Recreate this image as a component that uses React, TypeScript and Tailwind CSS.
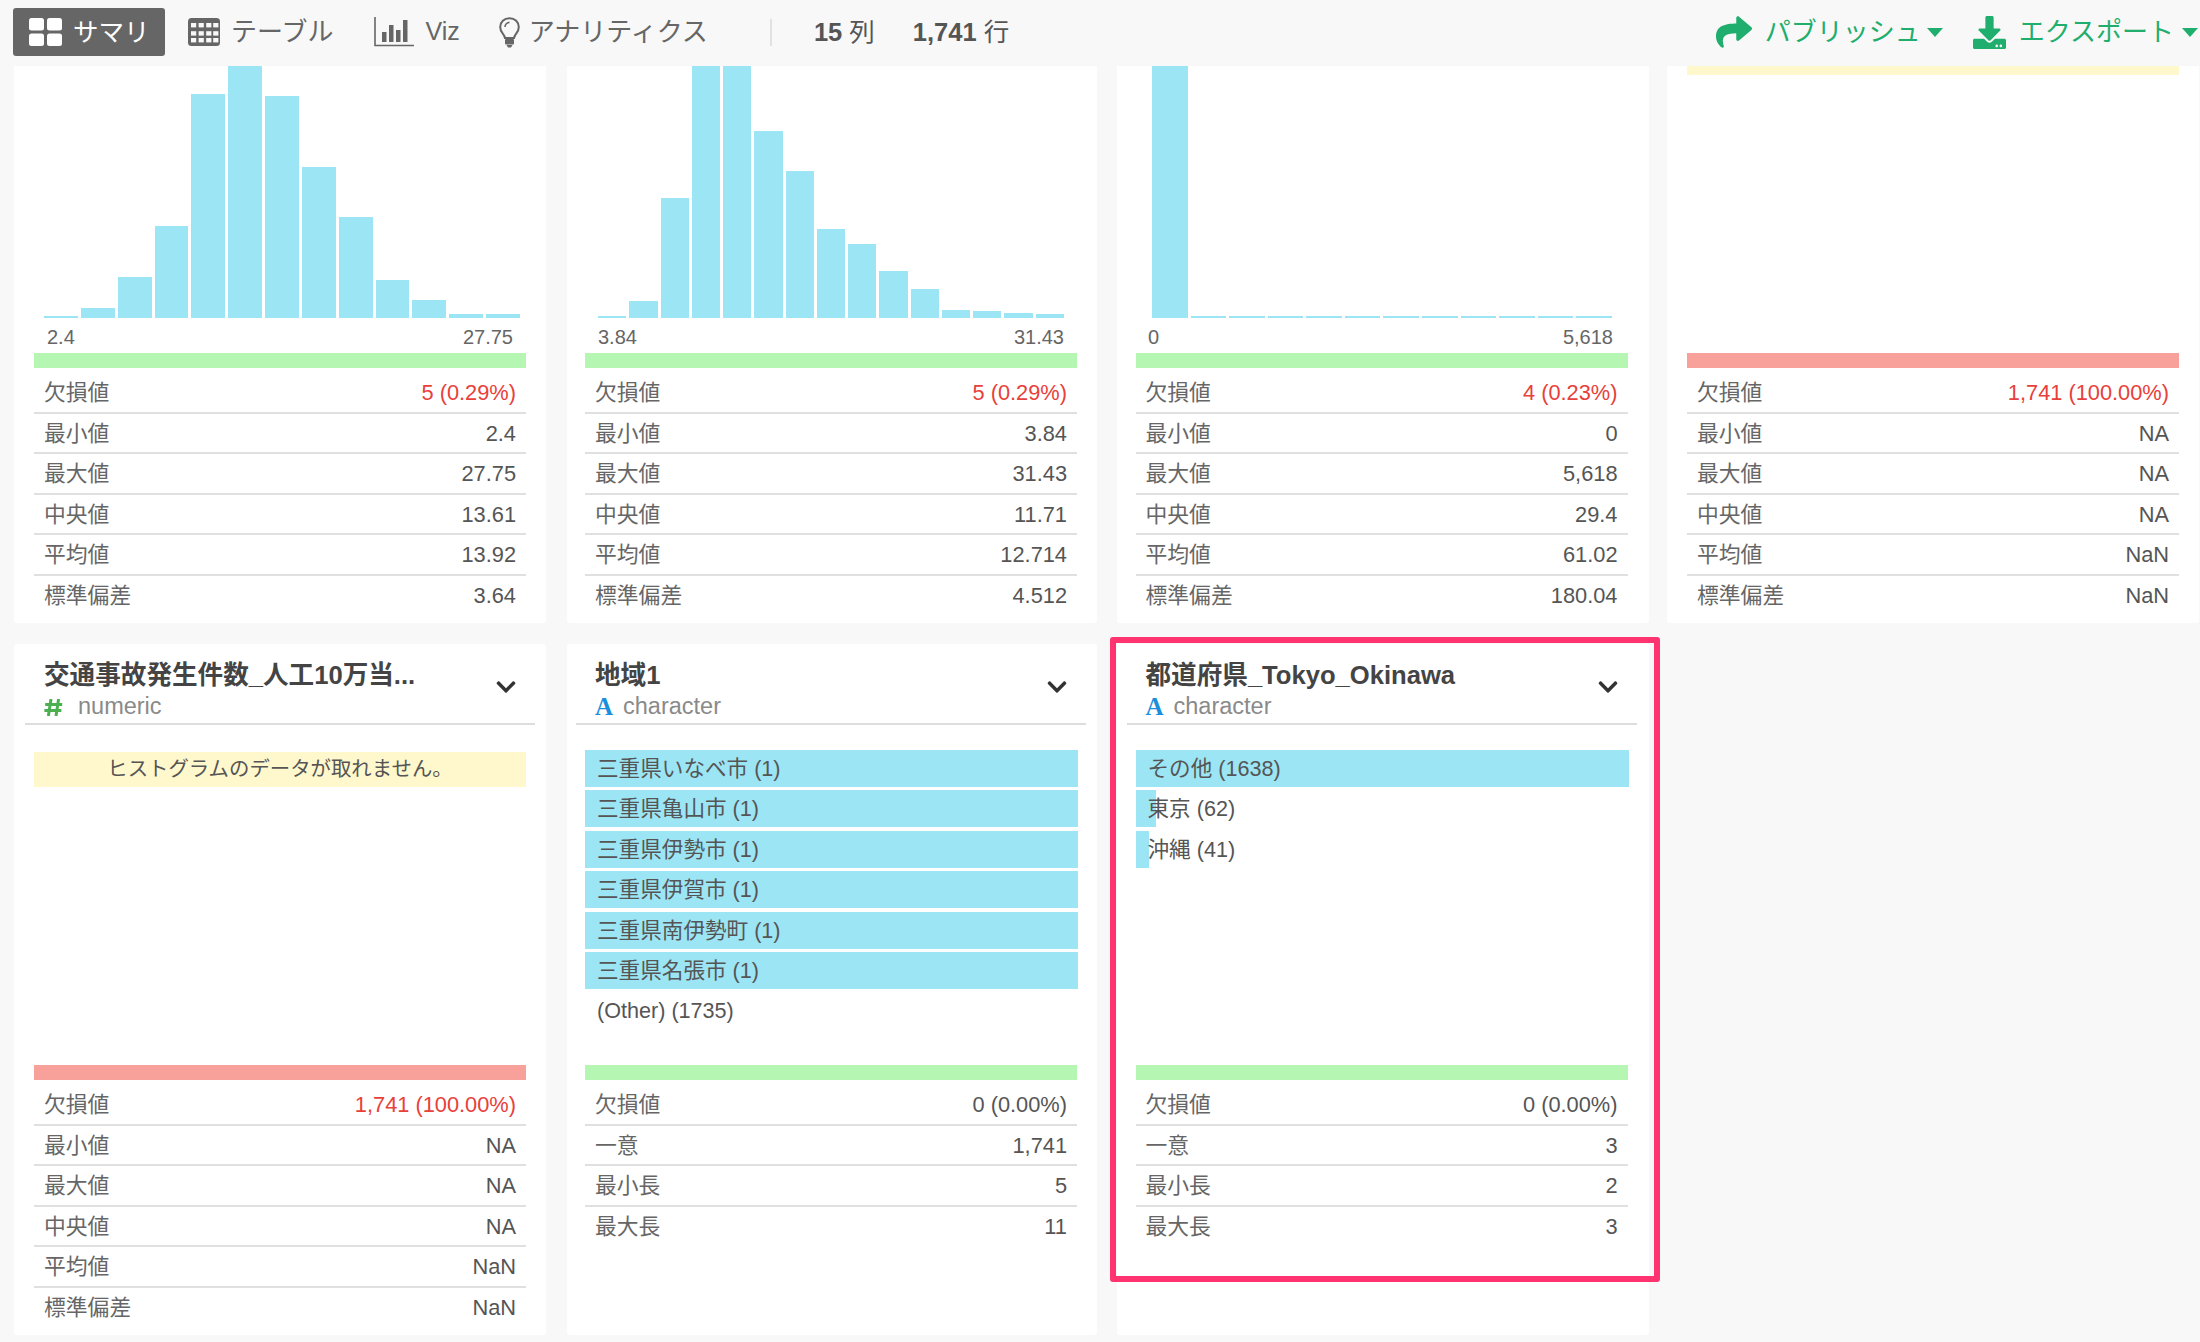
import React from "react";
import { FaShare, FaDownload, FaChevronDown } from "react-icons/fa";

type Row = [string, string, boolean?];

const Caret = () => (
  <svg width="16" height="9" viewBox="0 0 16 9" className="shrink-0">
    <path d="M0 0h16L8 9z" fill="#1fae6d" />
  </svg>
);

const SummaryIcon = () => (
  <svg width="33" height="28" viewBox="0 0 33 28" className="shrink-0">
    <rect x="0" y="0" width="15" height="12.5" rx="2.5" fill="#fff" />
    <rect x="18" y="0" width="15" height="12.5" rx="2.5" fill="#fff" />
    <rect x="0" y="15.5" width="15" height="12.5" rx="2.5" fill="#fff" />
    <rect x="18" y="15.5" width="15" height="12.5" rx="2.5" fill="#fff" />
  </svg>
);

const TableIcon = () => (
  <svg width="32" height="28" viewBox="0 0 32 28" className="shrink-0">
    <rect x="0" y="0" width="32" height="28" rx="3.5" fill="#666" />
    {[5, 13.2, 20].map((y) =>
      [3, 10.6, 18.2, 25.2].map((x) => (
        <rect key={`${x}-${y}`} x={x} y={y} width="5.2" height="4.4" fill="#f8f8f8" />
      ))
    )}
  </svg>
);

const ChartIcon = () => (
  <svg width="40" height="30" viewBox="0 0 40 30" className="shrink-0">
    <path d="M1 0v28.5h39" fill="none" stroke="#666" strokeWidth="1.6" />
    <rect x="8" y="15" width="4.5" height="10" fill="#666" />
    <rect x="15" y="8" width="4.5" height="17" fill="#666" />
    <rect x="22" y="13" width="4.5" height="12" fill="#666" />
    <rect x="29" y="3" width="4.5" height="22" fill="#666" />
  </svg>
);

const BulbIcon = () => (
  <svg width="21" height="31" viewBox="0 0 21 31" className="shrink-0">
    <path
      d="M10.5 1.2C5 1.2 1.2 5.2 1.2 10c0 3 1.3 5 2.6 6.7 1.1 1.5 2 2.8 2.2 4.3h9c.2-1.5 1.1-2.8 2.2-4.3 1.3-1.7 2.6-3.7 2.6-6.7 0-4.8-3.8-8.8-9.3-8.8z"
      fill="none"
      stroke="#666"
      strokeWidth="2"
    />
    <path d="M6 10c0-2.6 2-4.6 4.5-4.6" fill="none" stroke="#666" strokeWidth="1.6" />
    <rect x="6" y="22" width="9" height="5.5" rx="1" fill="#666" />
    <path d="M7.5 28h6l-1.5 2.6H9z" fill="#666" />
  </svg>
);

const HashIcon = () => (
  <svg width="19" height="17" viewBox="0 0 19 17" className="shrink-0 mr-[15px]">
    <path d="M7 0 4.4 17M14.6 0 12 17M1.2 5.6h17M.4 11.4h17" fill="none" stroke="#4caf50" strokeWidth="3" />
  </svg>
);

const Histogram = ({ bars, left, width }: { bars: number[]; left: string; width: string }) => (
  <div className={`h-[252px] flex items-end gap-[3px] overflow-hidden ${left} ${width}`}>
    {bars.map((h, i) => (
      <div key={i} className="flex-1 bg-[#9ce5f4]" style={{ height: h }} />
    ))}
  </div>
);

const Stats = ({ rows }: { rows: Row[] }) => (
  <div className="mt-[5px] mx-[20px] text-[21.8px] leading-[40px]">
    {rows.map(([k, v, red], i) => (
      <div
        key={k}
        className={`h-[40.5px] flex justify-between px-[10px] ${i < rows.length - 1 ? "border-b-2 border-[#e0e0e0]" : ""}`}
      >
        <span className="text-[#666]">{k}</span>
        <span className={red ? "text-[#e8403a]" : "text-[#555]"}>{v}</span>
      </div>
    ))}
  </div>
);

const numRows = (miss: string, min: string, max: string, med: string, avg: string, sd: string, bad = true): Row[] => [
  ["欠損値", miss, bad],
  ["最小値", min],
  ["最大値", max],
  ["中央値", med],
  ["平均値", avg],
  ["標準偏差", sd],
];

const charRows = (u: string, a: string, b: string): Row[] => [
  ["欠損値", "0 (0.00%)"],
  ["一意", u],
  ["最小長", a],
  ["最大長", b],
];

const Quality = ({ red }: { red?: boolean }) => (
  <div className={`mx-[20px] h-[15px] ${red ? "bg-[#f7a19a]" : "bg-[#b6f6b3]"}`} />
);

const Labels = ({ a, b, pad }: { a: string; b: string; pad: string }) => (
  <div className={`h-[35px] pt-[3px] flex items-center justify-between text-[20px] text-[#666] ${pad}`}>
    <span>{a}</span>
    <span>{b}</span>
  </div>
);

const Header = ({ title, type }: { title: string; type: "num" | "chr" }) => (
  <div className="relative mx-[11px] h-[81px] pt-[15px] px-[19px] border-b-2 border-[#ddd]">
    <div className="h-[32px] leading-[32px] text-[25.6px] font-bold text-[#444] whitespace-nowrap">{title}</div>
    <div className="h-[32px] flex items-center text-[23.5px] text-[#8a8a8a]">
      {type === "num" ? (
        <HashIcon />
      ) : (
        <span className="w-[28px] font-['Liberation_Serif',serif] text-[25px] font-bold text-[#1b8fdc]">A</span>
      )}
      <span>{type === "num" ? "numeric" : "character"}</span>
    </div>
    <FaChevronDown className="absolute right-[18px] top-[32px] text-[22px] text-[#333]" />
  </div>
);

const CatBar = ({ label, w }: { label: string; w?: number }) => (
  <div className="relative h-[37px] mb-[3.4px]">
    {w !== undefined && <div className="absolute inset-y-0 left-0 bg-[#9ce5f4]" style={{ width: w }} />}
    <div className="absolute inset-0 pl-[12px] leading-[38px] text-[21.6px] text-[#555] whitespace-nowrap">{label}</div>
  </div>
);

const Area = ({ children }: { children: React.ReactNode }) => (
  <div className="h-[340px] pt-[25px] mx-[20px]">{children}</div>
);

export default function App() {
  return (
    <div className="w-[2200px] h-[1342px] overflow-hidden bg-[#f8f8f8] font-['Liberation_Sans','Noto_Sans_CJK_JP',sans-serif]">
      <header className="h-[66px] flex items-center text-[#666] text-[26px] pb-[2px]">
        <div className="ml-[13px] w-[152px] h-[48px] rounded-[3px] bg-[#666] flex items-center pl-[16px] gap-[11px] text-white text-[25.5px]">
          <SummaryIcon />
          <span>サマリ</span>
        </div>
        <div className="ml-[23px] flex items-center gap-[11px]">
          <TableIcon />
          <span>テーブル</span>
        </div>
        <div className="ml-[41px] flex items-center gap-[11px]">
          <ChartIcon />
          <span className="text-[25px]">Viz</span>
        </div>
        <div className="ml-[39.5px] flex items-center gap-[8.5px]">
          <BulbIcon />
          <span>アナリティクス</span>
        </div>
        <div className="ml-[62px] w-[2px] h-[27px] bg-[#e2e2e2]" />
        <div className="ml-[42px] text-[#555] text-[25.5px]">
          <b>15</b> 列
        </div>
        <div className="ml-[38px] text-[#555] text-[25.5px]">
          <b>1,741</b> 行
        </div>
        <div className="ml-auto flex items-center text-[#1fae6d]">
          <FaShare className="text-[36px]" />
          <span className="ml-[13px]">パブリッシュ</span>
          <span className="ml-[6px] mr-[30px]">
            <Caret />
          </span>
          <FaDownload className="text-[33px]" />
          <span className="ml-[13px]">エクスポート</span>
          <span className="ml-[8px] mr-[2px]">
            <Caret />
          </span>
        </div>
      </header>

      <div className="flex items-stretch text-[#555]">
        <section className="ml-[14px] w-[532px] bg-white rounded-b-[3px] pb-[7px]">
          <Histogram
            left="ml-[30px]"
            width="w-[476px]"
            bars={[2, 10, 41, 92, 224, 260, 222, 151, 101, 38, 18, 4, 4]}
          />
          <Labels a="2.4" b="27.75" pad="pl-[33px] pr-[33px]" />
          <Quality />
          <Stats rows={numRows("5 (0.29%)", "2.4", "27.75", "13.61", "13.92", "3.64")} />
        </section>
        <section className="ml-[21px] w-[530px] bg-white rounded-b-[3px] pb-[7px]">
          <div className="-ml-[2px] w-[532px]">
            <Histogram
              left="ml-[33px]"
              width="w-[466px]"
              bars={[2, 17, 120, 260, 260, 187, 147, 89, 74, 47, 29, 8, 7, 5, 4]}
            />
            <Labels a="3.84" b="31.43" pad="pl-[33px] pr-[33px]" />
            <Quality />
            <Stats rows={numRows("5 (0.29%)", "3.84", "31.43", "11.71", "12.714", "4.512")} />
          </div>
        </section>
        <section className="ml-[20px] w-[532px] bg-white rounded-b-[3px] pb-[7px]">
          <div className="-ml-[1.5px] w-[532px]">
            <Histogram
              left="ml-[36.5px]"
              width="w-[460px]"
              bars={[260, 2, 2, 2, 2, 2, 2, 2, 2, 2, 2, 2]}
            />
            <Labels a="0" b="5,618" pad="pl-[32.5px] pr-[34.5px]" />
            <Quality />
            <Stats rows={numRows("4 (0.23%)", "0", "5,618", "29.4", "61.02", "180.04")} />
          </div>
        </section>
        <section className="ml-[18px] w-[532px] bg-white rounded-b-[3px] pb-[7px]">
          <div className="h-[287px]">
            <div className="mx-[20px] h-[9px] bg-[#fff8cc]" />
          </div>
          <Quality red />
          <Stats rows={numRows("1,741 (100.00%)", "NA", "NA", "NA", "NaN", "NaN")} />
        </section>
      </div>

      <div className="flex items-stretch mt-[21px] text-[#555]">
        <section className="ml-[14px] w-[532px] bg-white rounded-[3px] pb-[7px]">
          <Header title="交通事故発生件数_人工10万当..." type="num" />
          <Area>
            <div className="mt-[2px] h-[35px] bg-[#fff8cc] text-center leading-[35px] text-[20.4px] text-[#555]">
              ヒストグラムのデータが取れません。
            </div>
          </Area>
          <Quality red />
          <Stats rows={numRows("1,741 (100.00%)", "NA", "NA", "NA", "NaN", "NaN")} />
        </section>
        <section className="ml-[21px] w-[530px] bg-white rounded-[3px] pb-[7px]">
          <div className="-ml-[2px] w-[532px]">
            <Header title="地域1" type="chr" />
            <Area>
              <div className="mr-[-1px]">
                {["三重県いなべ市 (1)", "三重県亀山市 (1)", "三重県伊勢市 (1)", "三重県伊賀市 (1)", "三重県南伊勢町 (1)", "三重県名張市 (1)"].map((l) => (
                  <CatBar key={l} label={l} w={493} />
                ))}
                <CatBar label="(Other) (1735)" />
              </div>
            </Area>
            <Quality />
            <Stats rows={charRows("1,741", "5", "11")} />
          </div>
        </section>
        <section className="relative ml-[20px] w-[532px] bg-white rounded-[3px] pb-[7px]">
          <div className="-ml-[1.5px] w-[532px]">
            <Header title="都道府県_Tokyo_Okinawa" type="chr" />
            <Area>
              <div>
                <CatBar label="その他 (1638)" w={493} />
                <CatBar label="東京 (62)" w={20} />
                <CatBar label="沖縄 (41)" w={13} />
              </div>
            </Area>
            <Quality />
            <Stats rows={charRows("3", "2", "3")} />
          </div>
          <div className="absolute left-[-7px] top-[-7px] w-[550px] h-[645px] border-[6.5px] border-[#ff3370] rounded-[3px] pointer-events-none" />
        </section>
      </div>
    </div>
  );
}
